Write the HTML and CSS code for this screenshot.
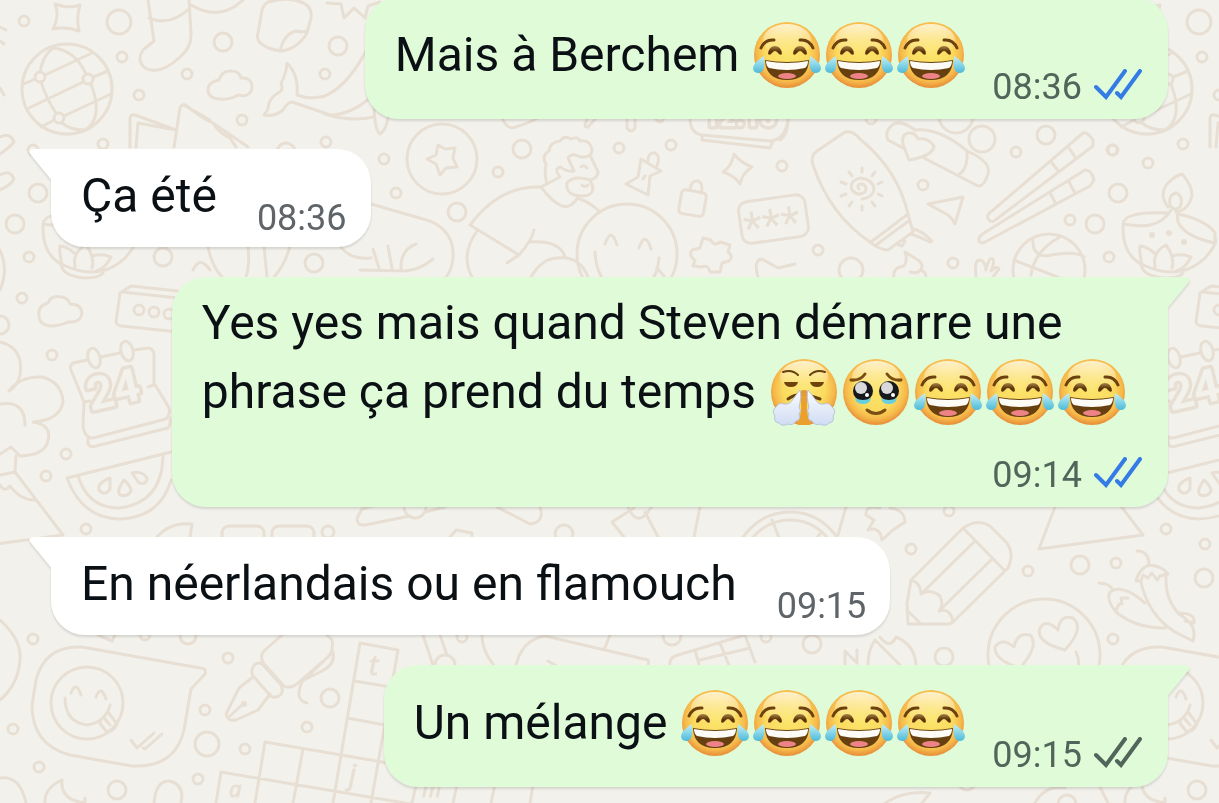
FILE: index.html
```html
<!DOCTYPE html>
<html lang="fr">
<head>
    <meta charset="UTF-8">
    <meta name="viewport" content="width=device-width, initial-scale=1.0">
    <title>Discussion</title>
    <link rel="stylesheet" href="styles.css">
</head>
<body>
    <!-- Shared symbols -->
    <svg class="sprite" aria-hidden="true">
        <defs>
            <radialGradient id="face-fill" cx="50%" cy="45%" r="54%">
                <stop offset="0" stop-color="#fbe56a"/>
                <stop offset="0.6" stop-color="#fadb60"/>
                <stop offset="0.85" stop-color="#f6b84a"/>
                <stop offset="1" stop-color="#e8913a"/>
            </radialGradient>
            <linearGradient id="face-shine" x1="0" y1="0" x2="0" y2="1">
                <stop offset="0" stop-color="#fff6dc" stop-opacity="0.9"/>
                <stop offset="1" stop-color="#fff0b0" stop-opacity="0"/>
            </linearGradient>
            <linearGradient id="tear-fill" x1="0" y1="0" x2="0" y2="1">
                <stop offset="0" stop-color="#c4f1f8"/>
                <stop offset="1" stop-color="#4dbad8"/>
            </linearGradient>
            <linearGradient id="eye-fill" x1="0" y1="0" x2="0" y2="1">
                <stop offset="0" stop-color="#a98348"/>
                <stop offset="0.6" stop-color="#5d3508"/>
            </linearGradient>
            <linearGradient id="steam-fill" x1="0" y1="0" x2="0" y2="1">
                <stop offset="0" stop-color="#fbfcff"/>
                <stop offset="1" stop-color="#cfdcf2"/>
            </linearGradient>
        </defs>

        <symbol id="face" viewBox="0 0 72 72">
            <circle cx="36" cy="36" r="33" fill="url(#face-fill)"/>
            <ellipse cx="36" cy="21" rx="24" ry="16" fill="url(#face-shine)"/>
        </symbol>

        <symbol id="joy" viewBox="0 0 72 72">
            <use href="#face"/>
            <g fill="none" stroke="#6b420f" stroke-width="3" stroke-linecap="round">
                <path d="M10 29Q14 20 23 21"/>
                <path d="M62 29Q58 20 49 21"/>
            </g>
            <path d="M17 35Q18 27 24 27T31 35Q29 37 27 34Q24 30 21 34Q19 37 17 35Z" fill="url(#eye-fill)"/>
            <path d="M42 35Q43 27 49 27T56 35Q54 37 52 34Q49 30 46 34Q44 37 42 35Z" fill="url(#eye-fill)"/>
            <path d="M14 41Q36 45 58 41Q57 61 36 61T14 41Z" fill="#66400f"/>
            <path d="M15 42Q36 46 57 42Q57 47 54 49Q36 53 18 49Q15 47 15 42Z" fill="#fdfbf6"/>
            <ellipse cx="36" cy="57" rx="9" ry="3" fill="#ee8387"/>
            <path d="M13 37Q15 53 8 54Q2 54 2 49Q2 44 13 37Z" fill="url(#tear-fill)"/>
            <path d="M59 37Q57 53 64 54Q70 54 70 49Q70 44 59 37Z" fill="url(#tear-fill)"/>
        </symbol>

        <symbol id="triumph" viewBox="0 0 72 72">
            <use href="#face"/>
            <g fill="none" stroke="#65400f" stroke-width="2" stroke-linecap="round">
                <path d="M15 16Q24 13 30 19"/>
                <path d="M57 16Q48 13 42 19"/>
                <path d="M20 43Q27 38 36 39T52 43" stroke-width="3"/>
            </g>
            <path d="M16 26H30Q29 31 23 31T16 26Z" fill="#70420b"/>
            <path d="M42 26H56Q55 31 49 31T42 26Z" fill="#70420b"/>
            <ellipse cx="36" cy="38" rx="5" ry="4" fill="#e39b35"/>
            <path d="M31 40Q36 50 30 69H42Q36 50 41 40Z" fill="#e9a02f"/>
            <g fill="url(#steam-fill)" stroke="#b7c4dc" stroke-width="1">
                <path d="M32 34Q34 40 31 51Q34 55 31 58Q33 64 28 65Q25 70 20 68Q14 71 11 67Q5 66 7 60Q3 55 8 51Q11 46 16 48Q22 49 25 43Z"/>
                <path d="M40 34Q38 40 41 51Q38 55 41 58Q39 64 44 65Q47 70 52 68Q58 71 61 67Q67 66 65 60Q69 55 64 51Q61 46 56 48Q50 49 47 43Z"/>
            </g>
        </symbol>

        <symbol id="holding-tears" viewBox="0 0 72 72">
            <use href="#face"/>
            <g fill="none" stroke="#7a4d12" stroke-width="3" stroke-linecap="round">
                <path d="M11 24Q20 25 25 18"/>
                <path d="M61 24Q52 25 47 18"/>
                <path d="M27 54Q36 61 45 54"/>
            </g>
            <circle cx="23" cy="35" r="10" fill="#17181b"/>
            <circle cx="49" cy="35" r="10" fill="#17181b"/>
            <path d="M15 42Q23 46 31 42Q30 48 23 48T15 42Z" fill="#66cfe0"/>
            <path d="M41 42Q49 46 57 42Q56 48 49 48T41 42Z" fill="#66cfe0"/>
            <circle cx="21" cy="32" r="6" fill="#d9d9dc"/>
            <circle cx="47" cy="32" r="6" fill="#d9d9dc"/>
            <circle cx="27" cy="39" r="2" fill="#fff"/>
            <circle cx="53" cy="39" r="2" fill="#fff"/>
        </symbol>

        <symbol id="ticks" viewBox="0 0 48 31">
            <path d="M2 18L12 28L31 2M23 24L27 28L46 2" fill="none" stroke="currentColor" stroke-width="4" stroke-linecap="round" stroke-linejoin="miter"/>
        </symbol>

        <symbol id="tail" viewBox="0 0 24 36">
            <path d="M24 0H4Q-2 1 2 6L24 33Z" fill="currentColor"/>
        </symbol>
    </svg>

    <!-- Doodle wallpaper, the first column comes back every 1080 units -->
    <svg class="wallpaper" viewBox="0 0 1219 803" preserveAspectRatio="xMinYMin slice" aria-hidden="true">
        <g id="column">
            <circle cx="24" cy="21" r="5"/><circle cx="122" cy="57" r="5"/><circle cx="139" cy="95" r="5"/>
            <circle cx="103" cy="144" r="5"/><circle cx="33" cy="150" r="5"/><circle cx="29" cy="257" r="5"/>
            <circle cx="22" cy="298" r="5"/><circle cx="52" cy="355" r="5"/><circle cx="66" cy="454" r="5"/>
            <circle cx="46" cy="476" r="5"/><circle cx="86" cy="529" r="5"/><circle cx="33" cy="639" r="5"/>
            <circle cx="13" cy="729" r="5"/><circle cx="39" cy="767" r="5"/>
            <circle cx="38" cy="193" r="9"/><circle cx="15" cy="224" r="9"/><circle cx="0" cy="325" r="9"/>
            <circle cx="117" cy="790" r="9"/><circle cx="119" cy="22" r="12"/>
            <path d="M55 4Q68 9 80 5Q76 18 79 31Q66 26 53 29Q60 16 55 4Z"/>
            <!-- globe -->
            <circle cx="67" cy="89" r="45"/><circle cx="40" cy="77" r="5"/><circle cx="88" cy="79" r="5"/><circle cx="59" cy="118" r="5"/>
            <path d="M24 84L35 79M45 75L92 53M29 108L83 82M93 77L108 71M64 116L111 94M41 127L54 120M40 72Q43 55 53 48Q75 50 86 74M91 84Q104 118 85 130Q70 130 62 123M41 82Q47 100 56 113"/>
            <!-- book -->
            <path d="M130 147V118Q131 114 135 115L176 130L138 123L136 147M174 147L180 108Q182 103 187 106Q200 117 213 123L248 147M184 105L210 120M213 123Q220 134 230 138L236 147"/>
            <!-- oil lamp -->
            <path d="M88 213Q44 211 43 224Q63 227 70 225Q84 222 91 210M43 226Q42 255 63 265Q100 282 125 258Q135 247 136 240M98 214Q126 220 135 233V243Q105 237 98 222L97 210M88 207Q80 197 85 187Q92 177 102 174Q112 185 112 195Q109 210 96 212M90 205Q88 194 97 193Q104 198 100 207Q94 212 90 205M62 264Q59 252 60 246Q68 247 74 253M75 267Q72 252 86 245Q95 257 92 268M92 256Q102 253 111 257Q106 268 96 271M61 262Q60 276 85 278Q100 278 103 273"/>
            <g class="dots"><circle cx="72" cy="235" r="3"/><circle cx="89" cy="233" r="3"/><circle cx="104" cy="242" r="3"/></g>
            <path d="M39 317Q37 306 48 303Q51 295 62 297Q68 298 70 304Q82 304 82 314Q80 323 68 322Q60 326 50 326Q40 325 39 317Z"/>
            <path d="M178 291L131 286L120 293L116 322Q117 326 122 326L178 332M122 292L178 298"/>
            <circle cx="139" cy="310" r="5"/><circle cx="154" cy="312" r="5"/><circle cx="169" cy="314" r="5"/>
            <path d="M0 342Q24 348 20 375Q17 387 9 391Q20 376 42 377Q62 382 63 402Q60 420 33 422Q52 425 48 440Q46 455 20 456L11 447L0 454M0 404Q25 400 25 425M16 456L15 472L0 475M15 472L63 535L-41 549L-25 507M0 485Q4 493 10 486Q20 500 35 500"/>
            <!-- calendar -->
            <path d="M87 360L73 363Q69 366 71 370L84 402L83 425Q84 438 93 438L166 419Q172 412 168 406L154 383V354Q153 348 148 348L134 350M101 357L120 353M84 402L90 401M113 395L120 394M148 387L154 385M88 439V444Q91 448 96 446L168 428Q171 424 170 418"/>
            <ellipse cx="94" cy="358" rx="6" ry="10" transform="rotate(-15 94 358)"/>
            <ellipse cx="127" cy="351" rx="6" ry="10" transform="rotate(-15 127 351)"/>
            <text class="doodle-date" x="91" y="411" transform="rotate(-13 91 411)">24</text>
            <!-- melon -->
            <path d="M171 452L67 478Q82 518 119 519Q160 518 171 480M78 476Q88 508 119 508Q162 503 163 456"/>
            <path d="M110 478Q97 483 99 490Q105 497 110 489ZM124 480Q116 491 120 495Q128 497 131 491Q131 486 124 480ZM132 473Q142 470 147 478Q147 485 139 483Z"/>
            <!-- tongue-out chat bubble -->
            <path d="M82 647Q45 645 36 680L32 705Q32 745 70 755L132 766Q175 768 184 730L191 689L205 674Q207 668 200 668Z"/>
            <circle cx="87" cy="703" r="36"/>
            <path d="M71 693Q76 680 81 695M96 697Q101 684 106 699M65 698Q65 722 87 725Q106 722 110 705M99 722L108 712L117 724Q113 733 106 731ZM104 718L110 725M131 740L137 748L154 733M143 748L145 749L162 734"/>
            <path d="M62 780Q44 788 45 803M62 780Q60 800 85 803V798"/>
        </g>
        <use href="#column" x="1080"/>

        <!-- top left -->
        <circle cx="187" cy="74" r="5"/><circle cx="242" cy="120" r="5"/><circle cx="325" cy="74" r="5"/><circle cx="326" cy="142" r="5"/>
        <circle cx="223" cy="42" r="9"/><circle cx="338" cy="46" r="9"/><circle cx="163" cy="257" r="9"/><circle cx="314" cy="263" r="9"/><circle cx="286" cy="152" r="9"/>
        <path d="M148 0L154 41L143 50Q136 60 145 68Q160 76 180 57Q192 47 191 33L189 0M149 18Q170 27 190 8M191 5Q220 22 243 0"/>
        <path d="M268 2Q285 -3 298 1Q313 5 311 18L307 33Q297 50 280 51Q254 46 258 33L262 10Q264 4 268 2ZM280 51Q284 34 296 31Q304 33 308 30"/>
        <path d="M327 3L341 4L344 18L354 8L365 18L368 6L380 2"/>
        <path d="M208 90Q208 82 219 80Q222 70 232 71Q239 71 241 78Q252 77 252 88Q250 98 238 95Q230 100 219 99Q208 98 208 90Z"/>
        <path d="M370 43Q350 85 325 96Q310 100 297 95Q299 75 287 63Q286 75 281 83Q283 88 281 91Q268 98 268 109L264 115Q275 117 283 110Q288 102 292 102Q310 108 330 115Q350 115 370 98M325 114Q350 122 374 117M374 100Q374 130 380 134Q386 130 388 118"/>
        <path d="M0 137Q10 132 14 142Q10 147 0 154M0 175Q10 169 14 179Q11 185 0 190M0 27L6 30M0 41L4 44M0 88L4 95M0 250Q9 270 0 290"/>
        <path d="M208 246Q211 265 222 277M248 246Q250 265 246 277M264 246L267 277M290 246Q285 265 274 277M193 270Q200 255 210 270M340 246Q350 260 371 258"/>

        <!-- middle -->
        <circle cx="384" cy="159" r="5"/><circle cx="396" cy="193" r="5"/><circle cx="498" cy="172" r="5"/><circle cx="619" cy="148" r="5"/><circle cx="671" cy="145" r="5"/><circle cx="782" cy="166" r="5"/>
        <circle cx="457" cy="212" r="9"/><circle cx="522" cy="149" r="9"/><circle cx="442" cy="159" r="35"/>
        <path d="M438 145L445 149L455 148L453 158L457 167L446 168L440 175L436 164L427 159L436 155Z"/>
        <path d="M371 204L430 221Q455 232 453 258Q452 270 446 277M360 270L405 271Q420 270 433 259M373 249L379 268M388 246L392 268M416 244Q400 250 401 270"/>
        <path d="M470 225Q500 185 541 187Q560 212 571 205Q577 200 577 198Q590 202 600 212M470 225L519 255L507 263M519 255Q532 240 534 230M477 231Q460 255 472 277M530 242Q560 240 565 257M531 277Q542 258 558 258Q580 256 588 277"/>
        <path d="M541 187L560 177Q553 168 561 167Q566 172 574 171L568 158Q572 152 580 157Q592 158 592 150Q590 139 580 141Q578 136 571 139Q564 135 560 141Q550 142 549 151Q541 156 546 164Q544 174 547 184M591 157L598 172Q598 178 590 180Q598 195 583 196Q565 196 567 183Q574 175 590 180M582 185Q585 188 588 185M581 167Q584 164 587 168"/>
        <circle cx="627" cy="254" r="50"/>
        <path d="M605 244Q611 226 617 245M639 248Q645 230 651 249M595 252Q597 290 627 290Q657 290 659 258M657 268L664 276"/>
        <path d="M641 159L661 171L650 176L648 195L626 184L638 177ZM648 161Q648 152 655 153Q661 156 657 166M645 176L643 179"/>
        <rect x="680" y="191" width="25" height="24" rx="4" transform="rotate(10 692 203)"/>
        <path d="M690 190Q691 180 698 181Q704 183 701 193"/>
        <path d="M734 154Q741 163 752 167Q742 173 740 184Q734 175 723 172Q732 166 734 154Z"/>
        <rect x="740" y="198" width="67" height="42" rx="9" transform="rotate(-8 774 219)"/>
        <text class="doodle-stars" x="746" y="244" transform="rotate(-8 746 244)">***</text>
        <path d="M703 238L711 240Q714 247 720 242L730 245L728 252Q734 256 729 261L722 263L720 272L710 272Q708 264 702 267L693 266L695 260Q688 256 692 250L700 248Z"/>
        <path d="M758 277Q753 260 762 259L778 268L795 264"/>
        <path d="M690 118Q690 133 702 135L770 141Q785 140 788 120M702 135V140L770 148L773 141"/>
        <text class="doodle-clock" x="704" y="126">12:15</text>
        <path d="M502 118Q508 132 518 126Q524 125 538 118M588 118Q582 128 588 127L596 118M627 118V128Q631 134 635 128V118M655 118Q661 126 664 118"/>

        <!-- top right -->
        <circle cx="1016" cy="152" r="5"/><circle cx="1112" cy="150" r="5"/><circle cx="1148" cy="163" r="5"/><circle cx="1070" cy="220" r="5"/><circle cx="818" cy="250" r="5"/><circle cx="953" cy="263" r="5"/><circle cx="923" cy="185" r="5"/><circle cx="871" cy="119" r="5"/>
        <circle cx="1046" cy="135" r="9"/><circle cx="851" cy="270" r="12"/><circle cx="982" cy="139" r="13"/><circle cx="956" cy="116" r="17"/>
        <path d="M845 132Q853 130 860 139Q898 170 908 214L913 232L888 250Q880 250 870 242Q830 215 813 165Q810 156 817 151ZM871 242L908 214M876 245L910 220M914 229Q922 231 932 241L930 242Q920 237 911 234M897 244L902 246L905 241"/>
        <path d="M862 168V172M862 206V210M841 182L846 184M841 196L846 194M878 184L882 182M878 194L882 196M849 172L852 176M875 172L872 176M849 206L852 202M875 206L872 202M859 189Q856 184 862 184Q868 186 865 192Q858 197 852 190Q849 180 861 178Q874 180 874 190Q872 198 862 199"/>
        <path d="M928 204L963 197L955 224Q952 218 948 215Z"/>
        <path d="M903 148L888 140Q884 132 892 125Q900 119 915 130Q940 128 967 151Q992 162 988 174Q984 187 978 186L924 158M967 151Q968 170 958 175M909 160L903 144Q901 132 911 133Q916 134 918 139Q928 137 934 146Q933 156 909 160Z"/>
        <path d="M988 218Q986 215 992 211L1083 133Q1087 131 1093 140V146L994 221Q990 223 988 218ZM1069 148L1075 157M1052 163L1059 172M979 241Q978 237 984 233L1085 170Q1092 170 1094 180L1090 186L985 242Q980 244 979 241ZM1069 182L1075 193M1050 193L1056 204"/>
        <circle cx="1049" cy="270" r="36"/>
        <path d="M1014 260L1060 278M1033 240Q1032 255 1046 256Q1075 250 1084 257M1060 237Q1035 250 1031 275"/>
        <path d="M894 277Q892 268 904 266Q908 260 905 252L918 260Q924 264 921 270Q926 272 926 277M910 272Q918 274 920 270"/>
        <path d="M976 277Q974 259 980 260Q985 261 986 270Q989 256 993 259Q995 262 991 271Q997 265 999 269L993 277"/>
        <path d="M780 140Q788 135 788 118"/>

        <!-- strip above the fourth message -->
        <path d="M157 537Q170 522 192 524L190 537M357 518Q357 526 365 525L410 516M357 518L362 509L380 504M425 512L445 507M497 507L530 524Q545 522 540 507M450 537L456 530L472 533V538"/>
        <rect x="222" y="526" width="42" height="20" rx="7"/><rect x="272" y="526" width="42" height="20" rx="7"/>
        <circle cx="328" cy="532" r="6"/><circle cx="415" cy="507" r="11"/><circle cx="564" cy="534" r="9"/>
        <path d="M624 537L612 522L634 508M645 512L658 537M628 507Q638 530 652 506M700 507L694 537"/>
        <circle cx="790" cy="568" r="56"/><circle cx="790" cy="568" r="48"/>
        <path d="M772 520L780 540M838 535L846 507M822 532L812 542M880 508Q865 505 866 515L874 520L868 530Q880 526 882 540L893 530L905 522Q905 510 890 508"/>

        <!-- pen and crossword -->
        <circle cx="145" cy="635" r="5"/><circle cx="228" cy="658" r="5"/><circle cx="205" cy="710" r="5"/><circle cx="245" cy="749" r="5"/><circle cx="307" cy="727" r="5"/><circle cx="198" cy="779" r="5"/>
        <circle cx="188" cy="636" r="8"/><circle cx="330" cy="698" r="9"/><circle cx="207" cy="744" r="12"/>
        <path d="M0 620Q22 640 20 660Q18 685 0 700M98 635L112 641L115 635"/>
        <path d="M282 635L264 651Q259 657 264 664L284 686Q290 689 297 684L328 657Q334 650 332 640L327 635M253 667Q258 659 265 667L281 685Q285 695 276 697Q271 698 268 693L254 677Q250 672 253 667ZM253 677L239 688L226 714Q228 722 236 720L258 710L270 694M230 716L243 704M333 652Q336 665 320 672L306 679M333 652L302 682Q294 700 307 703"/>
        <g class="dots"><circle cx="244" cy="704" r="3"/></g>
        <path d="M360 643L398 650L371 803M360 643L333 803M354 681L391 687M347 718L385 725M265 742L400 765M265 742L255 803M303 749L293 803M221 772L600 836M221 772L216 803M420 768L412 803M458 780L453 803M496 780L491 803M534 780L530 803"/>
        <text class="doodle-letter" x="369" y="675">t</text>
        <text class="doodle-letter" x="349" y="784">j</text>
        <text class="doodle-letter small" x="229" y="797">a</text>
        <text class="doodle-letter small" x="422" y="797">m</text>
        <path d="M0 778Q20 775 26 803M154 803Q156 780 170 781Q185 785 181 803"/>

        <!-- strip above the last message -->
        <circle cx="462" cy="637" r="5"/><circle cx="766" cy="637" r="5"/><circle cx="672" cy="636" r="9"/><circle cx="812" cy="644" r="9"/><circle cx="445" cy="665" r="10"/>
        <path d="M423 635L433 665M440 635L447 655M482 635Q482 653 498 670M515 670Q520 640 545 636L648 660Q650 666 645 668M610 635L604 650M548 661L560 668M670 668Q668 657 678 655L745 635L755 662M695 650L700 668M720 643L730 668M700 660L750 648M845 665V651L857 663V650M868 665Q868 650 875 640L900 665M880 637Q890 650 896 637Q915 645 916 665"/>

        <!-- bottom right -->
        <circle cx="911" cy="549" r="5"/><circle cx="949" cy="511" r="5"/><circle cx="1028" cy="571" r="5"/><circle cx="1116" cy="563" r="5"/><circle cx="1205" cy="544" r="5"/>
        <circle cx="1080" cy="565" r="9"/><circle cx="1204" cy="578" r="9"/><circle cx="944" cy="657" r="9"/><circle cx="967" cy="781" r="9"/><circle cx="1067" cy="804" r="9"/>
        <path d="M911 580L963 528Q978 518 990 526L1006 542Q1015 553 1008 568L953 622Q950 625 943 624H908L907 603ZM963 528L1004 570M975 541L921 594M992 559L939 611M911 580Q921 583 921 594Q930 588 940 596Q944 605 939 611Q950 607 953 622M907 610L921 624"/>
        <circle cx="1044" cy="655" r="56"/>
        <path d="M1065 650Q1035 642 1040 628Q1046 618 1058 630Q1060 614 1073 618Q1085 628 1065 650ZM1020 668Q994 660 995 647Q1002 637 1014 647Q1017 632 1030 635Q1040 645 1020 668ZM1076 652Q1080 660 1078 668"/>
        <path d="M1137 551Q1149 551 1149 565M1136 581Q1140 567 1150 565Q1162 566 1168 574L1160 576L1157 580L1152 573L1148 578L1143 575L1141 581ZM1141 582Q1148 615 1175 632L1193 641Q1198 625 1180 615Q1165 600 1166 577M1099 583Q1109 583 1113 590M1116 612Q1106 600 1110 592Q1122 583 1145 603M1116 612Q1118 602 1122 604L1121 598L1128 598M1116 612Q1135 628 1165 628M1178 613Q1196 613 1194 623L1185 621"/>
        <path d="M885 803Q905 790 930 793L922 803M1035 803Q1045 785 1065 788M1100 787L1108 803"/>
    </svg>

    <main class="chat">
        <div class="message sent">
            <p class="text">Mais à Berchem <svg class="emoji"><use href="#joy"/></svg><svg class="emoji"><use href="#joy"/></svg><svg class="emoji"><use href="#joy"/></svg></p>
            <div class="meta">
                <time>08:36</time>
                <svg class="ticks read"><use href="#ticks"/></svg>
            </div>
        </div>

        <div class="message received">
            <svg class="tail"><use href="#tail"/></svg>
            <p class="text">Ça été</p>
            <div class="meta"><time>08:36</time></div>
        </div>

        <div class="message sent stacked">
            <svg class="tail"><use href="#tail"/></svg>
            <p class="text">Yes yes mais quand Steven démarre une<br>phrase ça prend du temps <svg class="emoji"><use href="#triumph"/></svg><svg class="emoji"><use href="#holding-tears"/></svg><svg class="emoji"><use href="#joy"/></svg><svg class="emoji"><use href="#joy"/></svg><svg class="emoji"><use href="#joy"/></svg></p>
            <div class="meta">
                <time>09:14</time>
                <svg class="ticks read"><use href="#ticks"/></svg>
            </div>
        </div>

        <div class="message received">
            <svg class="tail"><use href="#tail"/></svg>
            <p class="text">En néerlandais ou en flamouch</p>
            <div class="meta"><time>09:15</time></div>
        </div>

        <div class="message sent">
            <svg class="tail"><use href="#tail"/></svg>
            <p class="text">Un mélange <svg class="emoji"><use href="#joy"/></svg><svg class="emoji"><use href="#joy"/></svg><svg class="emoji"><use href="#joy"/></svg><svg class="emoji"><use href="#joy"/></svg></p>
            <div class="meta">
                <time>09:15</time>
                <svg class="ticks"><use href="#ticks"/></svg>
            </div>
        </div>
    </main>
</body>
</html>
```
FILE: styles.css
```css
:root {
    --background: #f3f1eb;
    --doodle: #e8dfd4;
    --sent: #dffbd8;
    --received: #ffffff;
    --text-color: #0b1014;
    --meta-sent: #52655a;
    --meta-received: #5f6468;
    --read: #347be6;
}

* {
    box-sizing: border-box;
    margin: 0;
    padding: 0;
}

body {
    min-height: 100vh;
    background-color: var(--background);
    color: var(--text-color);
    font-family: Roboto, "Liberation Sans", sans-serif;
    overflow: hidden;
}

.sprite {
    position: absolute;
    width: 0;
    height: 0;
}

/* Wallpaper */
.wallpaper {
    position: fixed;
    inset: 0;
    width: 100%;
    height: 100%;
    z-index: -1;
    fill: none;
    stroke: var(--doodle);
    stroke-width: 3;
    stroke-linecap: round;
    stroke-linejoin: round;
}

.wallpaper .dots,
.wallpaper .doodle-stars {
    fill: var(--doodle);
    stroke: none;
}

.wallpaper text {
    font-family: Roboto, sans-serif;
}

/* Bubble digits: wide outline with the paper colour filled back in */
.wallpaper .doodle-date,
.wallpaper .doodle-clock {
    fill: var(--background);
    stroke-width: 7;
    paint-order: stroke;
}

.doodle-date {
    font-size: 46px;
    font-weight: 700;
}

.doodle-stars {
    font-size: 44px;
}

.doodle-clock {
    font-size: 28px;
    font-weight: 700;
}

.wallpaper .doodle-letter {
    font-family: "Open Sans", sans-serif;
    font-size: 28px;
    font-style: italic;
    fill: var(--doodle);
    stroke-width: 1;
}

.wallpaper .doodle-letter.small {
    font-size: 22px;
}

/* Messages */
.chat {
    display: flex;
    flex-direction: column;
    gap: 30px;
    margin-top: -3px;
    padding: 0 51px;
}

.message {
    position: relative;
    display: flex;
    align-items: flex-end;
    border-radius: 34px;
    filter: drop-shadow(0 2px 1px rgba(0, 0, 0, 0.12));
}

.sent {
    align-self: flex-end;
    gap: 25px;
    padding: 23px 26px 13px 30px;
    background: var(--sent);
}

.received {
    align-self: flex-start;
    gap: 40px;
    padding: 12px 24px 10px 30px;
    background: var(--received);
}

.stacked {
    flex-direction: column;
    gap: 30px;
    padding-top: 11px;
}

.text {
    font-size: 48px;
    line-height: 69px;
}

.sent .text {
    padding-bottom: 17px;
}

.received .text {
    padding-bottom: 7px;
}

.stacked .text {
    align-self: flex-start;
    padding-right: 14px;
    padding-bottom: 0;
}

.meta {
    display: flex;
    align-items: center;
    gap: 12px;
    font-size: 36px;
    line-height: 38px;
    color: var(--meta-sent);
}

.received .meta {
    color: var(--meta-received);
}

.emoji {
    width: 72px;
    height: 72px;
    margin: -10px 0;
    vertical-align: -10px;
}

.ticks {
    width: 48px;
    height: 31px;
    margin-bottom: 6px;
}

.ticks.read {
    color: var(--read);
}

/* Tail hangs out of the top corner */
.tail {
    position: absolute;
    top: 0;
    width: 24px;
    height: 36px;
}

.received .tail {
    left: -22px;
    color: var(--received);
}

.sent .tail {
    right: -22px;
    color: var(--sent);
    transform: scaleX(-1);
}

.received:has(.tail) {
    border-top-left-radius: 0;
}

.sent:has(.tail) {
    border-top-right-radius: 0;
}
```
